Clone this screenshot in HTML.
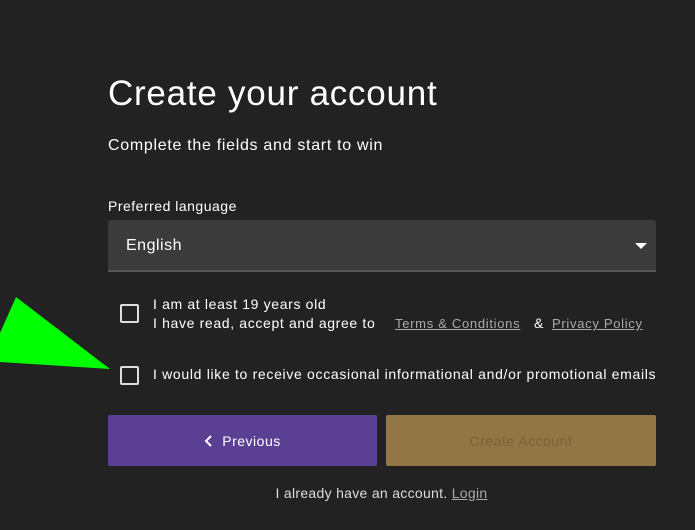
<!DOCTYPE html>
<html><head><style>
body{margin:0;width:695px;height:530px;background:#222;font-family:"Liberation Sans",sans-serif;color:#fff;position:relative;overflow:hidden}
.a{position:absolute}
.cb{position:absolute;width:15px;height:15px;border:2px solid #ddd;border-radius:2px;left:120px}
.u{color:#aaa;text-decoration:underline}
</style></head><body>
<svg class="a" style="left:0;top:0" width="695" height="530"><polygon points="16,297 110,369 0,362 0,333" fill="#00ff00"/></svg>
<div class="a" style="left:108px;top:74px;font-size:35px;letter-spacing:0.75px">Create your account</div>
<div class="a" style="left:108px;top:137px;font-size:16px;letter-spacing:0.7px">Complete the fields and start to win</div>
<div class="a" style="left:108px;top:198px;font-size:14px;letter-spacing:0.5px">Preferred language</div>
<div class="a" style="left:108px;top:220px;width:548px;height:50px;background:#3b3b3b;border-bottom:2px solid #555;border-radius:3px 3px 0 0"></div>
<div class="a" style="left:126px;top:237px;font-size:16px;letter-spacing:0.5px">English</div>
<svg class="a" style="left:635px;top:243px" width="12" height="6"><polygon points="0,0 12,0 6,6" fill="#fff"/></svg>
<div class="cb" style="top:304px"></div>
<div class="a" style="left:153px;top:295px;font-size:14px;line-height:19px;letter-spacing:0.65px;white-space:nowrap">I am at least 19 years old<br>I have read, accept and agree to<span class="u" style="position:absolute;left:242px;font-size:13px;letter-spacing:0.7px">Terms &amp; Conditions</span><span style="position:absolute;left:381px">&amp;</span><span class="u" style="position:absolute;left:399px;font-size:13px;letter-spacing:0.7px">Privacy Policy</span></div>
<div class="cb" style="top:366px"></div>
<div class="a" style="left:153px;top:366px;font-size:14px;letter-spacing:0.68px;white-space:nowrap">I would like to receive occasional informational and/or promotional emails</div>
<div class="a" style="left:108px;top:415px;width:269px;height:51px;background:#5a3f93;border-radius:2px;display:flex;align-items:center;justify-content:center;font-size:14px;letter-spacing:0.5px"><svg width="10" height="12" style="margin-right:8px"><polyline points="7,1 2,6 7,11" fill="none" stroke="#fff" stroke-width="2"/></svg>Previous</div>
<div class="a" style="left:386px;top:415px;width:270px;height:51px;background:#937645;border-radius:2px;display:flex;align-items:center;justify-content:center;font-size:14px;color:#7d6238;letter-spacing:0.5px">Create Account</div>
<div class="a" style="left:0;width:763px;top:485px;text-align:center;font-size:14px;color:#ddd;letter-spacing:0.3px">I already have an account. <span class="u">Login</span></div>
</body></html>
